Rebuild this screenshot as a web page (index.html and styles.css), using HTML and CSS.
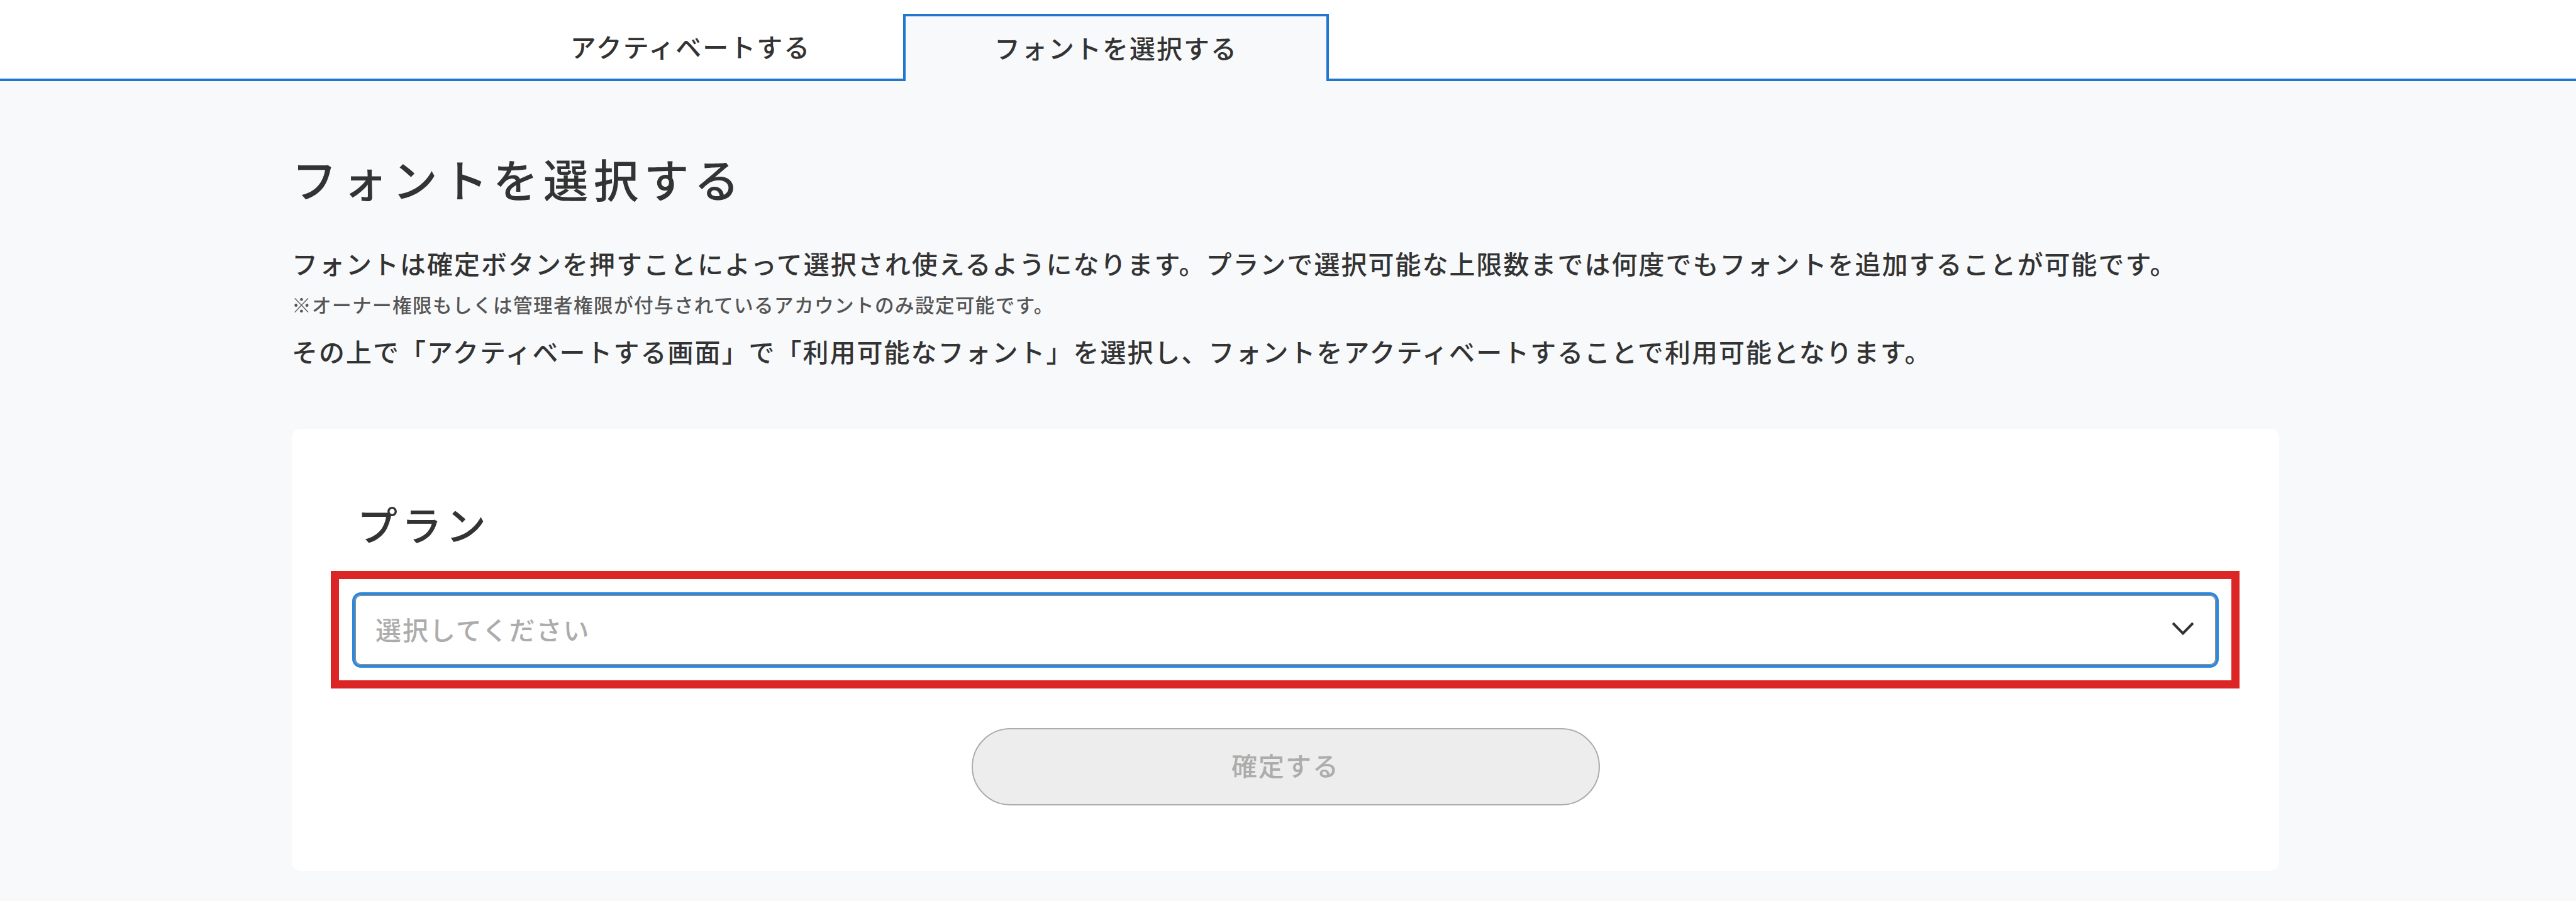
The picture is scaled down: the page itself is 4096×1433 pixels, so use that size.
FILE: index.html
```html
<!DOCTYPE html>
<html lang="ja">
<head>
<meta charset="utf-8">
<title>フォントを選択する</title>
<link rel="stylesheet" href="styles.css">
</head>
<body>
<nav class="tabs">
  <span class="tab-line"></span>
  <a class="tab">アクティベートする</a>
  <a class="tab tab-active">フォントを選択する</a>
  <span class="tab-line"></span>
</nav>
<main class="page">
  <h1 class="title">フォントを選択する</h1>
  <p class="lead">フォントは確定ボタンを押すことによって選択され使えるようになります。プランで選択可能な上限数までは何度でもフォントを追加することが可能です。</p>
  <p class="note">※オーナー権限もしくは管理者権限が付与されているアカウントのみ設定可能です。</p>
  <p class="lead">その上で「アクティベートする画面」で「利用可能なフォント」を選択し、フォントをアクティベートすることで利用可能となります。</p>
  <section class="card">
    <h2 class="card-title">プラン</h2>
    <div class="highlight">
      <div class="select">
        <span>選択してください</span>
        <svg class="chevron" viewBox="0 0 36 22" fill="none" stroke="#333" stroke-width="4"><path d="M2 2 18 18.5 34 2"/></svg>
      </div>
    </div>
    <button class="submit" disabled>確定する</button>
  </section>
</main>
</body>
</html>
```

FILE: styles.css
```css
* { box-sizing: border-box; }
body {
  margin: 0;
  height: 1433px;
  overflow: hidden;
  background: #f8f9fb;
  color: #333;
  font-family: "Noto Sans CJK JP", sans-serif;
  font-size: 40.96px;
  font-weight: 500;
  letter-spacing: 2.05px;
}
h1, h2, p { margin: 0; }

.tabs {
  display: grid;
  grid-template-columns: 760px 676px 677px 1fr;
  height: 129px;
  padding-top: 22px;
  background: #fff;
  box-sizing: border-box;
}
.tab-line, .tab { border-bottom: 4px solid #2176cd; }
.tab {
  display: flex;
  justify-content: center;
  line-height: 102px;
}
.tab-active {
  background: #f8f9fb;
  border: 4px solid #2176cd;
  border-bottom: 0;
  line-height: 98px;
}

.page {
  display: flex;
  flex-direction: column;
  width: 3160px;
  margin-left: 464px;
  padding-top: 103px;
}
.title {
  font-size: 71.68px;
  font-weight: 500;
  line-height: 102px;
  letter-spacing: 8.3px;
}
.lead {
  line-height: 80px;
  white-space: nowrap;
}
.title + .lead { margin-top: 44px; }
.note {
  color: #555;
  font-size: 30.6px;
  line-height: 52px;
  letter-spacing: 1.4px;
}
.note + .lead { margin-top: 8px; }

.card {
  display: flex;
  flex-direction: column;
  height: 703px;
  margin-top: 84px;
  padding: 100px 62px 0;
  border-radius: 14px;
  background: #fff;
}
.card-title {
  padding-left: 42px;
  font-size: 64px;
  font-weight: 500;
  line-height: 100px;
  letter-spacing: 6.4px;
}
.highlight {
  height: 187px;
  width: 3035px;
  margin-top: 26px;
  padding: 25px 24px 24px 25px;
  border: 13px solid #dc2626;
}
.select {
  display: flex;
  align-items: center;
  justify-content: space-between;
  height: 112px;
  padding: 0 33px 4px 31px;
  border: 2px solid #8c8c8c;
  outline: 4px solid #2889e0;
  border-radius: 10px;
  margin: 0;
  color: #acacac;
}
.chevron { width: 36px; height: 22px; }
.submit {
  align-self: center;
  width: 999px;
  height: 123px;
  margin-top: 63px;
  padding: 0 0 8px;
  border: 2px solid #acacac;
  border-radius: 62px;
  background: #ededed;
  color: #acacac;
  font: inherit;
  letter-spacing: inherit;
}
```
